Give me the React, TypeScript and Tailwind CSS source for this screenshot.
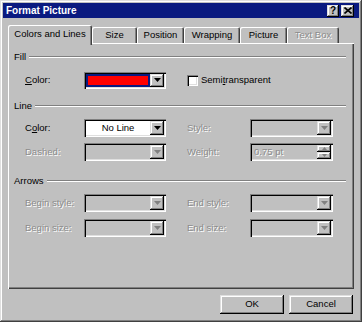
/**
 * Format Picture dialog (classic Windows look), Colors and Lines tab
 */

import type { ReactNode } from 'react';

const FONT = "font-['Liberation_Sans',Arial,sans-serif]";
const DISABLED = "text-[#8c8c8c] [text-shadow:1px_1px_0_#ffffff]";
const RAISED =
  'bg-[#c0c0c0] shadow-[inset_-1px_-1px_#000000,inset_1px_1px_#dfdfdf,inset_-2px_-2px_#808080,inset_2px_2px_#ffffff]';
const SUNKEN =
  'shadow-[inset_1px_1px_#808080,inset_2px_2px_#000000,inset_-1px_-1px_#ffffff,inset_-2px_-2px_#dfdfdf]';

const TABS = [
  { label: 'Size', width: 'w-[45px]' },
  { label: 'Position', width: 'w-[47px]' },
  { label: 'Wrapping', width: 'w-[56px]' },
  { label: 'Picture', width: 'w-[47px]' },
  { label: 'Text Box', width: 'w-[52px]', disabled: true },
];

function Arrow({ disabled }: { disabled?: boolean }) {
  return (
    <svg width="7" height="4" viewBox="0 0 7 4">
      <polygon points="0,0 7,0 3.5,4" fill={disabled ? '#808080' : '#000000'} />
    </svg>
  );
}

function ArrowButton({ disabled }: { disabled?: boolean }) {
  return (
    <div className={`flex w-[14px] shrink-0 items-center justify-center ${RAISED}`}>
      <Arrow disabled={disabled} />
    </div>
  );
}

function Combo({
  className,
  children,
  disabled,
}: {
  className: string;
  children?: ReactNode;
  disabled?: boolean;
}) {
  return (
    <div className={`flex h-[18px] p-[2px] ${SUNKEN} ${className}`}>
      <div className="flex-1 overflow-hidden">{children}</div>
      <ArrowButton disabled={disabled} />
    </div>
  );
}

function Label({
  children,
  className,
  disabled,
}: {
  children: ReactNode;
  className: string;
  disabled?: boolean;
}) {
  return (
    <div className={`${className} ${disabled ? DISABLED : 'text-black'}`}>{children}</div>
  );
}

function Section({ title, className }: { title: string; className: string }) {
  return (
    <div className={`flex h-[12px] items-center pl-[6px] pr-[8px] ${className}`}>
      <span className="pr-[3px] leading-none">{title}</span>
      <div className="flex-1 border-t border-b border-t-[#808080] border-b-white" />
    </div>
  );
}

function Spin() {
  return (
    <div className={`flex h-[18px] w-[83px] p-[2px] ${SUNKEN}`}>
      <div className={`flex-1 pl-[2px] leading-[14px] ${DISABLED}`}>0.75 pt</div>
      <div className="flex w-[14px] flex-col">
        <div className={`flex flex-1 items-center justify-center ${RAISED}`}>
          <svg width="5" height="3" viewBox="0 0 5 3">
            <polygon points="0,3 5,3 2.5,0" fill="#808080" />
          </svg>
        </div>
        <div className={`flex flex-1 items-center justify-center ${RAISED}`}>
          <svg width="5" height="3" viewBox="0 0 5 3">
            <polygon points="0,0 5,0 2.5,3" fill="#808080" />
          </svg>
        </div>
      </div>
    </div>
  );
}

function Button({ children }: { children: ReactNode }) {
  return (
    <div className={`flex h-[19px] w-[64px] items-center justify-center ${RAISED}`}>
      {children}
    </div>
  );
}

export default function App() {
  return (
    <div
      className={`${FONT} h-[322px] w-[362px] bg-[#c0c0c0] text-[9.5px] text-black shadow-[inset_-1px_-1px_#404040,inset_1px_1px_#dfdfdf,inset_-2px_-2px_#808080,inset_2px_2px_#ffffff] pt-[3px]`}
    >
      {/* Title bar */}
      <div className="mx-[3px] flex h-[15px] items-center bg-[#0a1a80] pl-[3px] pr-[5px]">
        <span className="flex-1 text-[10px] font-bold text-white">Format Picture</span>
        <div className={`mr-[2px] flex h-[12px] w-[12px] items-center justify-center text-[10px] font-bold leading-none ${RAISED}`}>
          ?
        </div>
        <div className={`flex h-[12px] w-[13px] items-center justify-center ${RAISED}`}>
          <svg width="8" height="7" viewBox="0 0 8 7">
            <path d="M0.5 0.5 L7.5 6.5 M7.5 0.5 L0.5 6.5" stroke="#000" strokeWidth="1.6" />
          </svg>
        </div>
      </div>

      {/* Tabs */}
      <div className="relative z-10 ml-[8px] mt-[7px] flex h-[18px] items-end">
        <div className="mb-[-2px] flex h-[20px] w-[84px] items-center justify-center rounded-t-[2px] bg-[#c0c0c0] pb-[1px] shadow-[inset_1px_1px_#ffffff,inset_-1px_0_#404040,inset_-2px_0_#808080]">
          Colors and Lines
        </div>
        {TABS.map((t) => (
          <div
            key={t.label}
            className={`flex h-[16px] items-center justify-center rounded-t-[2px] pt-[1px] shadow-[inset_1px_1px_#ffffff,inset_-1px_0_#404040,inset_-2px_0_#808080] ${t.width} ${t.disabled ? DISABLED : ''}`}
          >
            {t.label}
          </div>
        ))}
      </div>

      {/* Tab panel */}
      <div className="mx-[8px] h-[246px] w-[346px] pt-[8px] shadow-[inset_1px_1px_#ffffff,inset_-1px_-1px_#404040,inset_-2px_-2px_#808080]">
        <Section title="Fill" className="" />

        <div className="mt-[9px] flex h-[16px] items-center pl-[17px]">
          <Label className="w-[59px]">
            <span className="underline">C</span>olor:
          </Label>
          <div className={`flex h-[17px] w-[82px] p-[2px] ${SUNKEN}`}>
            <div className="flex-1 bg-[#0a1a80] p-[2px]">
              <div className="h-full w-full bg-[#ff0000]" />
            </div>
            <ArrowButton />
          </div>
          <div className="ml-[21px] flex items-center">
            <div className={`h-[11px] w-[11px] bg-white ${SUNKEN}`} />
            <span className="ml-[3px]">
              Semi<span className="underline">t</span>ransparent
            </span>
          </div>
        </div>

        <Section title="Line" className="mt-[12px]" />

        <div className="mt-[7px] flex h-[18px] items-center pl-[17px]">
          <Label className="w-[59px]">
            C<span className="underline">o</span>lor:
          </Label>
          <Combo className="w-[82px]">
            <div className="bg-white text-center leading-[14px]">No Line</div>
          </Combo>
          <Label className="ml-[21px] w-[63px]" disabled>
            Style:
          </Label>
          <Combo className="w-[83px]" disabled />
        </div>

        <div className="mt-[6px] flex h-[18px] items-center pl-[17px]">
          <Label className="w-[59px]" disabled>
            Dashed:
          </Label>
          <Combo className="w-[82px]" disabled />
          <Label className="ml-[21px] w-[63px]" disabled>
            Weight:
          </Label>
          <Spin />
        </div>

        <Section title="Arrows" className="mt-[14px]" />

        <div className="mt-[7px] flex h-[18px] items-center pl-[17px]">
          <Label className="w-[59px]" disabled>
            Begin style:
          </Label>
          <Combo className="w-[82px]" disabled />
          <Label className="ml-[21px] w-[63px]" disabled>
            End style:
          </Label>
          <Combo className="w-[83px]" disabled />
        </div>

        <div className="mt-[7px] flex h-[18px] items-center pl-[17px]">
          <Label className="w-[59px]" disabled>
            Begin size:
          </Label>
          <Combo className="w-[82px]" disabled />
          <Label className="ml-[21px] w-[63px]" disabled>
            End size:
          </Label>
          <Combo className="w-[83px]" disabled />
        </div>
      </div>

      {/* Buttons */}
      <div className="mt-[6px] flex justify-end gap-[5px] pr-[9px]">
        <Button>OK</Button>
        <Button>Cancel</Button>
      </div>
    </div>
  );
}
